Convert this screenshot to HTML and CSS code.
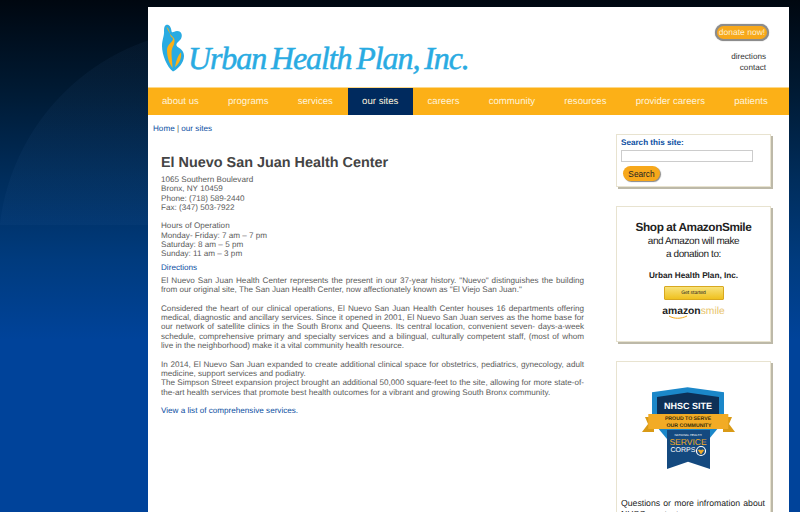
FILE: index.html
```html
<!DOCTYPE html>
<html lang="en">
<head>
  <meta charset="UTF-8" />
  <title>El Nuevo San Juan Health Center</title>
  <link rel="stylesheet" href="styles.css">
</head>
<body>
  <div class="wrapper">
    <div class="header">
      <a class="logo" href="#">
        <svg class="logo-mark" width="24" height="50" viewBox="0 0 24 50">
          <path fill="#29abe2" d="M4 2C7 1 9 4 9.500 8C10 11 12 8 15 8C20 8 21 13 18.500 16.500C16.500 19 14 20 14.500 22.500C15.500 25 22 26 22 33C22 40 16 46 11 48.500C5 44 0 32 0 23C0 17 2.500 12 2 8C2 5 2.500 2.500 4 2Z"/>
          <path fill="#fbb017" d="M4.500 4C6.500 5 7.500 8 8 11C8.500 15 11 14 11 16C11 19 5 21 5 27C5 34 7.500 41 10.500 45C10.500 37 8 28 11 23.500C12.500 21 12.500 19 12.500 17C12.500 14 8.500 13 7 9C6 7 5 5 4.500 4Z"/>
          <path fill="#fbb017" d="M13 44C17 41 20 35 19 29.500C16 32 14 38 13 44Z"/>
        </svg>
        <span class="logo-text">Urban Health Plan, Inc.</span>
      </a>
      <div class="header-links">
        <a class="donate" href="#">donate now!</a>
        <a href="#">directions</a>
        <a href="#">contact</a>
      </div>
    </div>

    <ul class="nav">
      <li><a href="#">about us</a></li>
      <li><a href="#">programs</a></li>
      <li><a href="#">services</a></li>
      <li class="active"><a href="#">our sites</a></li>
      <li><a href="#">careers</a></li>
      <li><a href="#">community</a></li>
      <li><a href="#">resources</a></li>
      <li><a href="#">provider careers</a></li>
      <li><a href="#">patients</a></li>
    </ul>

    <div class="main">
      <div class="content">
        <div class="crumbs"><a href="#">Home</a> | <a href="#">our sites</a></div>
        <div class="article">
          <h1>El Nuevo San Juan Health Center</h1>
          <p>1065 Southern Boulevard<br>Bronx, NY 10459<br>Phone: (718) 589-2440<br>Fax: (347) 503-7922<br><br>Hours of Operation<br>Monday- Friday: 7 am – 7 pm<br>Saturday: 8 am – 5 pm<br>Sunday: 11 am – 3 pm</p>
          <a class="directions" href="#">Directions</a>
          <p class="body-copy">El Nuevo San Juan Health Center represents the present in our 37-year history. "Nuevo" distinguishes the building from our original site, The San Juan Health Center, now affectionately known as "El Viejo San Juan."</p>
          <p class="body-copy">Considered the heart of our clinical operations, El Nuevo San Juan Health Center houses 16 departments offering medical, diagnostic and ancillary services. Since it opened in 2001, El Nuevo San Juan serves as the home base for our network of satellite clinics in the South Bronx and Queens. Its central location, convenient seven- days-a-week schedule, comprehensive primary and specialty services and a bilingual, culturally competent staff, (most of whom live in the neighborhood) make it a vital community health resource.</p>
          <p class="body-copy">In 2014, El Nuevo San Juan expanded to create additional clinical space for obstetrics, pediatrics, gynecology, adult medicine, support services and podiatry.<br>The Simpson Street expansion project brought an additional 50,000 square-feet to the site, allowing for more state-of-the-art health services that promote best health outcomes for a vibrant and growing South Bronx community.</p>
          <a class="services-link" href="#">View a list of comprehensive services.</a>
        </div>
      </div>

      <div class="sidebar">
        <form class="box search-box">
          <label for="q">Search this site:</label>
          <input type="text" id="q" />
          <button type="button">Search</button>
        </form>

        <div class="box amazon-box">
          <div class="amazon-title">Shop at AmazonSmile</div>
          <div class="amazon-sub">and Amazon will make<br>a donation to:</div>
          <div class="amazon-org">Urban Health Plan, Inc.</div>
          <div class="amazon-btn">Get started</div>
          <div class="amazon-logo"><b>amazon</b><span>smile</span>
            <svg width="20" height="4" viewBox="0 0 20 4"><path d="M1 1C6 4 13 4 19 1" fill="none" stroke="#f0a81c" stroke-width="1"/></svg>
          </div>
        </div>

        <div class="box nhsc-box">
          <svg class="nhsc-badge" width="94" height="84" viewBox="0 0 94 84">
            <path fill="#1b87c9" d="M10 5.300L45.500 0.300L82 5.300V34L62 58H30L10 34Z"/>
            <path fill="#0d3057" d="M15 10L45.500 5.500L77 10V28H15Z"/>
            <path fill="#14497f" d="M25 43H68V82L46 74.700L25 82Z"/>
            <path fill="#d99a16" d="M0 45L6 37L3 30H12V45Z"/>
            <path fill="#d99a16" d="M93 45L87 37L90 30H81V45Z"/>
            <rect x="6.300" y="27" width="80" height="15" fill="#f2ab25"/>
            <text x="46" y="22" class="nhsc-site">NHSC SITE</text>
            <text x="46" y="33" class="nhsc-proud">PROUD TO SERVE</text>
            <text x="47" y="39.700" class="nhsc-proud">OUR COMMUNITY</text>
            <text x="46" y="49" class="nhsc-small">NATIONAL HEALTH</text>
            <text x="46" y="58" class="nhsc-service">SERVICE</text>
            <text x="41" y="65.300" class="nhsc-corps">CORPS</text>
            <circle cx="59" cy="64" r="4.500" fill="none" stroke="#fff" stroke-width="1.200"/>
            <path fill="#f2ab25" d="M59 67.500L56 63.500C56.500 62 58.500 62 59 63.500C59.500 62 61.500 62 62 63.500Z"/>
          </svg>
          <p class="nhsc-text">Questions or more infromation about NHSC, contact:</p>
        </div>
      </div>
    </div>
  </div>
</body>
</html>
```

FILE: styles.css
```css
* {
  margin: 0;
  padding: 0;
  box-sizing: border-box;
}

html, body {
  height: 512px;
  overflow: hidden;
}

body {
  font-family: "Liberation Sans", Arial, sans-serif;
  font-size: 8.15px;
  line-height: 9.3px;
  color: #5a5a5a;
  text-rendering: geometricPrecision;
  background:
    radial-gradient(circle 222px at 220px 250px, rgba(60, 110, 170, 0.07) 99.6%, transparent 100%) 0 0 / 148px 225px no-repeat,
    linear-gradient(180deg, #000710 0, #001a33 90px, #002d5c 180px, #003b7e 260px, #00439a 340px, #00439a 100%);
}

a {
  color: #0b4ea2;
  text-decoration: none;
}

.wrapper {
  width: 641px;
  height: 505px;
  margin: 7px 0 0 148px;
  background: #fff;
  overflow: hidden;
}

/* header */
.header {
  height: 80px;
  display: flex;
  justify-content: space-between;
}

.logo {
  display: flex;
  align-items: flex-end;
  padding: 15px 0 0 14px;
  height: 66px;
}

.logo-mark {
  flex: none;
}

.logo-text {
  font-family: "Liberation Serif", serif;
  font-style: italic;
  font-size: 32px;
  line-height: 30px;
  letter-spacing: -1.1px;
  word-spacing: -2px;
  color: #29abe2;
  -webkit-text-stroke: 0.5px #29abe2;
  margin-left: 2px;
  white-space: nowrap;
}

.header-links {
  display: flex;
  flex-direction: column;
  align-items: flex-end;
  padding: 17px 23px 0 0;
  line-height: 11px;
}

.header-links a {
  color: #333;
}

.header-links .donate {
  width: 54px;
  height: 17px;
  margin: 0 -3px 10px 0;
  border: 2px solid #8c8c8c;
  border-radius: 9px;
  box-shadow: 0 0 1px #777;
  background: #f7a81b;
  color: #fdf0d0;
  font-size: 8.5px;
  line-height: 13px;
  text-align: center;
}

/* nav */
.nav {
  height: 28px;
  display: flex;
  list-style: none;
  background: #fcb017;
  border-top: 1px solid #fdd98a;
}

.nav li {
  padding: 0 14.6px;
}

.nav li:first-child {
  padding-left: 14px;
}

.nav a {
  display: block;
  color: #fdf3dc;
  font-size: 9.6px;
  line-height: 27px;
  white-space: nowrap;
}

.nav .active {
  background: #002a5e;
}

/* main column */
.main {
  display: flex;
}

.content {
  width: 468px;
  flex: none;
}

.crumbs {
  padding: 9px 0 0 5px;
  line-height: 9px;
}

.article {
  padding: 22px 0 0 13px;
  width: 436px;
}

.article h1 {
  font-size: 14.4px;
  line-height: 17px;
  color: #444;
  margin-bottom: 3px;
}

.directions {
  display: block;
  margin: 4px 0;
}

.body-copy {
  text-align: justify;
  margin-bottom: 9.3px;
}

.services-link {
  display: block;
}

/* sidebar */
.sidebar {
  width: 155px;
  padding-top: 19px;
  flex: none;
  display: flex;
  flex-direction: column;
  gap: 19px;
}

.box {
  border: 1px solid #e8e3d0;
  box-shadow: 2px 2px 0 #bdb9a8;
  background: #fff;
}

.search-box {
  height: 53px;
  padding: 3px 4px;
}

.search-box label {
  display: block;
  color: #0b4ea2;
  font-weight: bold;
  line-height: 10px;
}

.search-box input {
  display: block;
  width: 132px;
  height: 12px;
  margin-top: 2px;
  border: 1px solid #ccc;
}

.search-box button {
  display: block;
  width: 37px;
  height: 15px;
  margin: 4px 0 0 2px;
  border: none;
  border-radius: 8px;
  background: #f7a81b;
  box-shadow: 1px 1px 1px #888;
  font-family: "Liberation Sans", Arial, sans-serif;
  font-size: 8.3px;
  color: #222;
}

.amazon-box {
  height: 136px;
  padding-top: 13px;
  display: flex;
  flex-direction: column;
  align-items: center;
  color: #222;
}

.amazon-title {
  font-size: 11.8px;
  line-height: 14px;
  font-weight: bold;
  letter-spacing: -0.4px;
}

.amazon-sub {
  font-size: 10px;
  line-height: 13px;
  letter-spacing: -0.4px;
  text-align: center;
  margin-top: 1px;
}

.amazon-org {
  font-size: 8.2px;
  font-weight: bold;
  margin-top: 10px;
}

.amazon-btn {
  width: 60px;
  height: 14px;
  margin-top: 6px;
  border: 1px solid #d8a820;
  border-radius: 1px;
  background: linear-gradient(#f8e27a, #efc11f);
  font-size: 5px;
  line-height: 12px;
  text-align: center;
}

.amazon-logo {
  position: relative;
  margin-top: 5px;
  font-size: 10.3px;
  line-height: 13px;
}

.amazon-logo b {
  color: #222;
}

.amazon-logo span {
  color: #e8c46a;
}

.amazon-logo svg {
  position: absolute;
  left: 6px;
  top: 10px;
}

.nhsc-box {
  height: 200px;
  padding: 25px 5px 0 4px;
  color: #222;
}

.nhsc-badge {
  display: block;
  margin: 0 0 27px 21px;
}

.nhsc-site, .nhsc-proud, .nhsc-small, .nhsc-service, .nhsc-corps {
  font-family: "Liberation Sans", Arial, sans-serif;
  text-anchor: middle;
}

.nhsc-site {
  font-size: 9px;
  font-weight: bold;
  fill: #fff;
}

.nhsc-proud {
  font-size: 5.2px;
  font-weight: bold;
  fill: #3a2c08;
}

.nhsc-small {
  font-size: 3px;
  fill: #fff;
}

.nhsc-service {
  font-size: 8.5px;
  fill: #f2ab25;
}

.nhsc-corps {
  font-size: 7px;
  fill: #fff;
}

.nhsc-text {
  font-size: 8.7px;
  line-height: 11px;
  text-align: justify;
}
```
